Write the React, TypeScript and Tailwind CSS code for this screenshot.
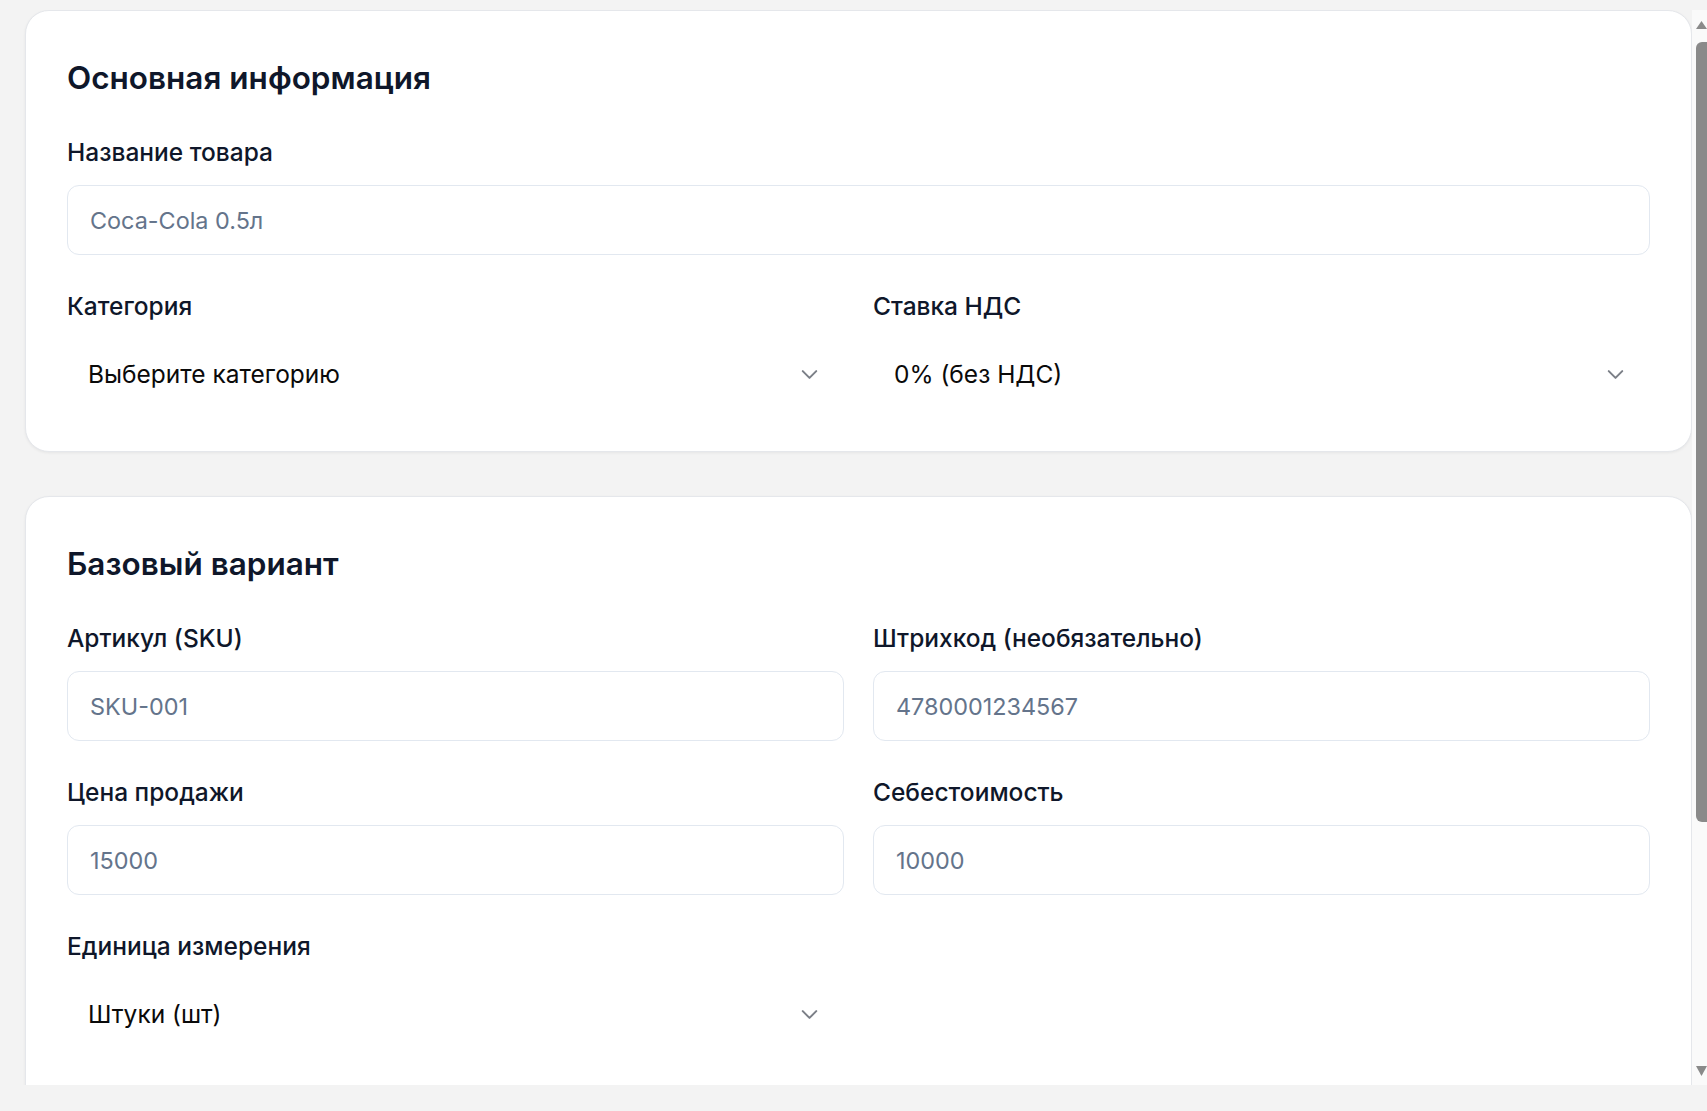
import React from 'react';
import { ChevronDown } from 'lucide-react';

type FieldProps = {
  label: string;
  placeholder: string;
};

const InputField = ({ label, placeholder }: FieldProps) => (
  <label className="flex flex-col gap-[15px]">
    <span className="text-[24.5px] font-medium leading-[36px] text-[#0f172a]">
      { label }
    </span>
    <input
      type="text"
      placeholder={ placeholder }
      className="h-[70px] w-full rounded-[12px] border border-[#e2e8f0] bg-white px-[22px] text-[23.4px] text-[#0f172a] outline-none placeholder:text-[#64748b]"
    />
  </label>
);

type SelectProps = {
  label: string;
  value: string;
};

const SelectField = ({ label, value }: SelectProps) => (
  <div className="flex flex-col gap-[15px]">
    <span className="text-[24.5px] font-medium leading-[36px] text-[#0f172a]">
      { label }
    </span>
    <button
      type="button"
      className="flex h-[70px] w-full items-center justify-between rounded-[12px] border border-transparent bg-white pl-[20px] pr-[20px] text-left text-[24.5px] text-[#0a0a0a]">
      <span>{ value }</span>
      <ChevronDown size={ 27 } strokeWidth={ 1.8 } className="text-[#7b7f87]"/>
    </button>
  </div>
);

type CardProps = {
  title: string;
  className?: string;
  children: React.ReactNode;
};

const Card = ({ title, className = 'pb-[42px]', children }: CardProps) => (
  <section
    className={ `rounded-[24px] border border-[#e5e7eb] bg-white px-[41px] pt-[49px] shadow-[0_1px_3px_rgba(0,0,0,0.06)] ${ className }` }>
    <h2 className="text-[31.5px] font-semibold leading-[36px] text-[#0f172a]">
      { title }
    </h2>
    <div className="mt-[38px] flex flex-col gap-[33px]">
      { children }
    </div>
  </section>
);

// fake classic scrollbar, the page is photographed without native ones
const ScrollBar = () => (
  <div className="flex w-[15px] shrink-0 flex-col bg-[#fafafa]">
    <svg width="15" height="11" viewBox="0 0 15 11" className="mt-[8px] shrink-0">
      <path d="M4 11 L9.5 3 L15 11 Z" fill="#8a8a8a"/>
    </svg>
    <div className="ml-[4px] mt-[13px] h-[780px] w-[11px] shrink-0 rounded-l-[6px] rounded-r-none bg-[#8a8a8a]"/>
    <div className="flex-1"/>
    <svg width="15" height="12" viewBox="0 0 15 12" className="mb-[8px] shrink-0">
      <path d="M4 1 L9.5 11 L15 1 Z" fill="#8a8a8a"/>
    </svg>
  </div>
);

export default function App() {
  return (
    <div className="h-screen w-full bg-[#f3f3f3] pt-[10px] font-['Inter',sans-serif]">
      <div className="flex h-[1075px]">
        <div className="min-w-0 flex-1 overflow-hidden pl-[25px]">
          <div className="flex flex-col gap-[44px]">
            <Card title="Основная информация">
              <InputField label="Название товара" placeholder="Coca-Cola 0.5л"/>
              <div className="grid grid-cols-2 gap-x-[29px]">
                <SelectField label="Категория" value="Выберите категорию"/>
                <SelectField label="Ставка НДС" value="0% (без НДС)"/>
              </div>
            </Card>

            <Card title="Базовый вариант" className="pb-[160px]">
              <div className="grid grid-cols-2 gap-x-[29px] gap-y-[33px]">
                <InputField label="Артикул (SKU)" placeholder="SKU-001"/>
                <InputField label="Штрихкод (необязательно)" placeholder="4780001234567"/>
                <InputField label="Цена продажи" placeholder="15000"/>
                <InputField label="Себестоимость" placeholder="10000"/>
                <SelectField label="Единица измерения" value="Штуки (шт)"/>
              </div>
            </Card>
          </div>
        </div>
        <ScrollBar/>
      </div>
    </div>
  );
}
